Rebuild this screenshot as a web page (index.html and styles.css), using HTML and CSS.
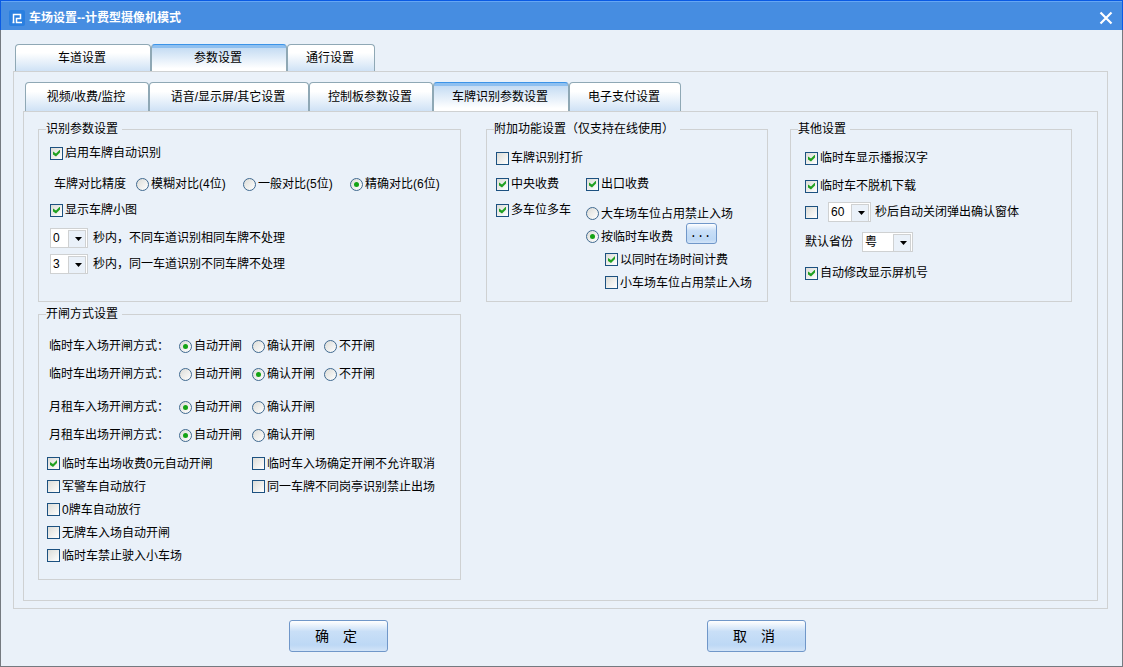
FILE: index.html
```
<!DOCTYPE html>
<html lang="zh-CN">
<head>
<meta charset="utf-8">
<title>车场设置--计费型摄像机模式</title>
<link rel="stylesheet" href="styles.css">
</head>
<body>
<div class="window">
  <header class="titlebar">
    <svg class="logo" width="16" height="16" viewBox="0 0 16 16" aria-hidden="true">
      <rect width="16" height="16" rx="2" fill="#2a7fe0"/>
      <path d="M3.5 12.5H5.5M4.5 13V4.5H11.5V8.5H7.5V12.5H13" fill="none" stroke="#fff" stroke-width="1.5"/>
    </svg>
    <h1 class="title">车场设置--计费型摄像机模式</h1>
    <button class="close" type="button" aria-label="关闭">
      <svg width="14" height="14" viewBox="0 0 14 14" aria-hidden="true"><path d="M1.5 1.5L12.5 12.5M12.5 1.5L1.5 12.5" stroke="#fff" stroke-width="2.2"/></svg>
    </button>
  </header>

  <main class="content">
    <nav class="tabs tabs-main">
      <button class="tab" type="button">车道设置</button>
      <button class="tab active" type="button">参数设置</button>
      <button class="tab" type="button">通行设置</button>
    </nav>
    <section class="panel panel-outer">
      <nav class="tabs tabs-sub">
        <button class="tab" type="button">视频/收费/监控</button>
        <button class="tab" type="button">语音/显示屏/其它设置</button>
        <button class="tab" type="button">控制板参数设置</button>
        <button class="tab active" type="button">车牌识别参数设置</button>
        <button class="tab" type="button">电子支付设置</button>
      </nav>
      <section class="panel panel-inner">
        <div class="column-left">
          <fieldset>
            <legend>识别参数设置</legend>
            <div class="group group-recognition">
              <div class="row"><label class="choice"><input type="checkbox" checked>启用车牌自动识别</label></div>
              <div class="row row-precision">
                <span>车牌对比精度</span>
                <label class="choice"><input type="radio" name="precision">模糊对比(4位)</label>
                <label class="choice"><input type="radio" name="precision">一般对比(5位)</label>
                <label class="choice"><input type="radio" name="precision" checked>精确对比(6位)</label>
              </div>
              <div class="row"><label class="choice"><input type="checkbox" checked>显示车牌小图</label></div>
              <div class="row row-delay first">
                <span class="select"><select id="diff-lane"><option>0</option></select></span>
                <label for="diff-lane">秒内，不同车道识别相同车牌不处理</label>
              </div>
              <div class="row row-delay">
                <span class="select"><select id="same-lane"><option>3</option></select></span>
                <label for="same-lane">秒内，同一车道识别不同车牌不处理</label>
              </div>
            </div>
          </fieldset>

          <fieldset>
            <legend>开闸方式设置</legend>
            <div class="group group-gate">
              <div class="row row-gate">
                <span>临时车入场开闸方式：</span>
                <label class="choice"><input type="radio" name="temp-in" checked>自动开闸</label>
                <label class="choice"><input type="radio" name="temp-in">确认开闸</label>
                <label class="choice"><input type="radio" name="temp-in">不开闸</label>
              </div>
              <div class="row row-gate">
                <span>临时车出场开闸方式：</span>
                <label class="choice"><input type="radio" name="temp-out">自动开闸</label>
                <label class="choice"><input type="radio" name="temp-out" checked>确认开闸</label>
                <label class="choice"><input type="radio" name="temp-out">不开闸</label>
              </div>
              <div class="row row-gate monthly">
                <span>月租车入场开闸方式：</span>
                <label class="choice"><input type="radio" name="month-in" checked>自动开闸</label>
                <label class="choice"><input type="radio" name="month-in">确认开闸</label>
              </div>
              <div class="row row-gate">
                <span>月租车出场开闸方式：</span>
                <label class="choice"><input type="radio" name="month-out" checked>自动开闸</label>
                <label class="choice"><input type="radio" name="month-out">确认开闸</label>
              </div>
              <div class="release">
                <div>
                  <label class="choice"><input type="checkbox" checked>临时车出场收费0元自动开闸</label>
                  <label class="choice"><input type="checkbox">军警车自动放行</label>
                  <label class="choice"><input type="checkbox">0牌车自动放行</label>
                  <label class="choice"><input type="checkbox">无牌车入场自动开闸</label>
                  <label class="choice"><input type="checkbox">临时车禁止驶入小车场</label>
                </div>
                <div>
                  <label class="choice"><input type="checkbox">临时车入场确定开闸不允许取消</label>
                  <label class="choice"><input type="checkbox">同一车牌不同岗亭识别禁止出场</label>
                </div>
              </div>
            </div>
          </fieldset>
        </div>

        <div class="column-right">
          <fieldset>
            <legend class="wide">附加功能设置（仅支持在线使用）</legend>
            <div class="group group-extra">
              <div class="row"><label class="choice"><input type="checkbox">车牌识别打折</label></div>
              <div class="extra-columns">
                <div>
                  <div class="row"><label class="choice"><input type="checkbox" checked>中央收费</label></div>
                  <div class="row"><label class="choice"><input type="checkbox" checked>多车位多车</label></div>
                </div>
                <div>
                  <div class="row"><label class="choice"><input type="checkbox" checked>出口收费</label></div>
                  <div class="multi">
                    <div class="row"><label class="choice"><input type="radio" name="multi">大车场车位占用禁止入场</label></div>
                    <div class="row">
                      <label class="choice"><input type="radio" name="multi" checked>按临时车收费</label>
                      <button class="button more" type="button">...</button>
                    </div>
                    <div class="row nested"><label class="choice"><input type="checkbox" checked>以同时在场时间计费</label></div>
                    <div class="row nested"><label class="choice"><input type="checkbox">小车场车位占用禁止入场</label></div>
                  </div>
                </div>
              </div>
            </div>
          </fieldset>

          <fieldset>
            <legend>其他设置</legend>
            <div class="group group-other">
              <div class="row"><label class="choice"><input type="checkbox" checked>临时车显示播报汉字</label></div>
              <div class="row"><label class="choice"><input type="checkbox" checked>临时车不脱机下载</label></div>
              <div class="row row-close">
                <input type="checkbox" id="auto-close">
                <span class="select select-seconds"><select aria-label="秒数"><option>60</option></select></span>
                <label for="auto-close">秒后自动关闭弹出确认窗体</label>
              </div>
              <div class="row row-province">
                <label for="province">默认省份</label>
                <span class="select select-province"><select id="province"><option>粤</option></select></span>
              </div>
              <div class="row last"><label class="choice"><input type="checkbox" checked>自动修改显示屏机号</label></div>
            </div>
          </fieldset>
        </div>
      </section>
    </section>
  </main>

  <footer class="footer">
    <button class="button action" type="button">确　定</button>
    <button class="button action" type="button">取　消</button>
  </footer>
</div>
</body>
</html>
```
FILE: styles.css
```
* { box-sizing: border-box; }

body {
  margin: 0;
  background: #eaf1f9;
  color: #000;
  font: 12px/16px "Liberation Sans", "Noto Sans CJK SC", sans-serif;
}

button, select, input { font: inherit; color: inherit; margin: 0; }

.window {
  display: flex;
  flex-direction: column;
  min-height: 100vh;
  border: 1px solid #757a80;
  border-top: 0;
}

/* Title bar */
.titlebar {
  display: flex;
  align-items: center;
  height: 30px;
  margin: 0 -1px;
  padding: 4px 9px 0 8px;
  border: 1px solid #0a5be4;
  border-bottom: 0;
  background: #468de1;
  box-shadow: inset 0 1px #65a6f4;
  color: #fff;
}
.title { flex: 1; margin: 0 0 0 4px; font-size: 12px; line-height: 16px; }
.close { display: flex; padding: 0; border: 0; background: none; }

/* Tabs */
.content { flex: 1; padding: 14px 14px 0 12px; }
.tabs { display: grid; }
.tabs-main { grid-template-columns: 136px 136px 88px; padding-left: 2px; }
.tabs-sub { grid-template-columns: 124px 160px 124px 136px 112px; padding-left: 2px; }
.tab {
  height: 27px;
  padding: 0 2px 0 0;
  border: 1px solid #8fa8b5;
  border-bottom: 0;
  border-radius: 4px 4px 0 0;
  background: linear-gradient(#fff 30%, #cfe2f5);
  white-space: nowrap;
}
.tabs-sub .tab { height: 29px; }
.tab.active {
  border-top-color: #3c94e8;
  background: linear-gradient(#8fc0f0 3px, #c5dcf3 3px, #fff 90%);
}

/* Panels */
.panel { border: 1px solid #cfd1d2; }
.panel-outer { padding: 10px 9px 7px; }
.panel-inner {
  display: grid;
  grid-template-columns: 423fr 586fr;
  gap: 25px;
  align-items: start;
  padding: 9px 25px 20px 14px;
}
.column-left { display: grid; gap: 4px; }
.column-right { display: grid; grid-template-columns: 1fr 1fr; gap: 22px; }

fieldset {
  min-width: 0;
  margin: 0;
  padding: 0 7px;
  border: 1px solid #cfd1d2;
  white-space: nowrap;
}
legend { padding: 0 4px 0 0; line-height: 16px; }
legend.wide { padding-right: 6px; }

/* Rows */
.row { display: flex; align-items: center; height: 26px; }
.choice { display: flex; align-items: center; gap: 2px; }

.group-recognition { padding: 3px 0 24px 4px; }
.row-precision {
  display: grid;
  grid-template-columns: 82px 107px 107px auto;
  margin-top: 5px;
  padding-left: 4px;
}
.row-delay { gap: 5px; }
.row-delay.first { margin-top: 2px; }

.group-gate { padding: 10px 0 12px 1px; }
.row-gate {
  display: grid;
  grid-template-columns: 130px 73px 72px auto;
  height: 28px;
  padding-left: 2px;
}
.row-gate.monthly { margin-top: 5px; }
.release { display: grid; grid-template-columns: 205px auto; justify-content: start; margin-top: 3px; }
.release .choice { height: 23px; }

.group-extra { padding: 8px 0 7px 2px; }
.extra-columns { display: grid; grid-template-columns: 90px auto; justify-content: start; }
.multi { margin-top: 5px; }
.multi .row { height: 23px; }
.multi .nested { padding-left: 19px; }

.group-other { padding: 7px 0 7px 7px; }
.group-other .row { height: 28px; }
.group-other .row-close { height: 24px; }
.row-close .select { margin: 0 4px 0 10px; }
.row-province { gap: 9px; margin-top: 4px; }
.group-other .last { margin-top: 3px; }

/* Check boxes and radios */
input {
  appearance: none;
  display: grid;
  place-items: center;
  flex: none;
  width: 13px;
  height: 13px;
  border: 1px solid #1c5180;
  background: linear-gradient(135deg, #dcdcd7, #fff);
}
input[type="radio"] { border-color: #40698f; border-radius: 50%; }
input[type="radio"]:checked::before {
  content: "";
  width: 5px;
  height: 5px;
  border-radius: 50%;
  background: #14a314;
}
input[type="checkbox"]:checked::before {
  content: "";
  width: 7px;
  height: 7px;
  background: #21a121;
  clip-path: polygon(0 29%, 43% 57%, 100% 0, 100% 43%, 43% 100%, 0 72%);
}

/* Drop-downs */
.select { position: relative; display: flex; width: 38px; height: 20px; }
.select-seconds { width: 43px; }
.select-province { width: 51px; }
.select select {
  appearance: none;
  width: 100%;
  padding: 0 18px 0 2px;
  border: 1px solid #cfd1d2;
  border-radius: 0;
  background: #fff;
  font-size: 12px;
}
.select::before {
  content: "";
  position: absolute;
  top: 2px;
  right: 2px;
  width: 16px;
  height: 16px;
  border: 1px solid #cfd1d2;
  background: #eaf1f9;
  pointer-events: none;
}
.select::after {
  content: "";
  position: absolute;
  top: 9px;
  right: 6px;
  width: 7px;
  height: 4px;
  background: #000;
  clip-path: polygon(0 0, 100% 0, 50% 100%);
  pointer-events: none;
}

/* Push buttons */
.button {
  padding: 0;
  border: 1px solid #7097c9;
  border-radius: 3px;
  background: linear-gradient(#fff, #c9dff7 35%, #bdd8f5 80%, #d2e4f8);
}
.more {
  width: 31px;
  height: 21px;
  margin: 0 0 6px 13px;
  padding-right: 2px;
  font-family: "Liberation Mono", monospace;
  line-height: 16px;
}

.footer {
  display: flex;
  justify-content: center;
  gap: 319px;
  padding: 11px 28px 14px 0;
}
.action { width: 99px; height: 32px; padding-right: 5px; font-size: 14px; }
```
